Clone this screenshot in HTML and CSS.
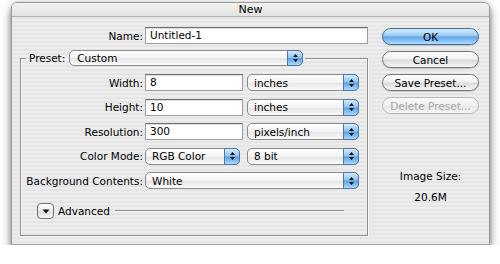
FILE: index.html
```html
<!DOCTYPE html>
<html lang="en">
<head>
    <meta charset="UTF-8">
    <title>New</title>
    <link rel="stylesheet" href="styles.css">
</head>
<body>
<div class="dialog">
    <div class="titlebar">New</div>
    <div class="dialog-body">
        <!-- Left side: fields -->
        <div class="form-side">
            <div class="field-row">
                <label class="field-label">Name:</label>
                <div class="text-input name-input">Untitled-1</div>
            </div>

            <fieldset class="preset-group">
                <legend class="preset-legend">
                    <span class="legend-label">Preset:</span>
                    <div class="popup preset-popup">
                        <span class="popup-label">Custom</span>
                        <span class="popup-arrows"><svg width="7" height="10" viewBox="0 0 7 10"><path d="M3.5 1 L6 4 H1Z M1 6 H6 L3.5 9Z" fill="#111"/></svg></span>
                    </div>
                </legend>

                <div class="rows">
                    <div class="field-row">
                        <label class="field-label">Width:</label>
                        <div class="text-input size-input">8</div>
                        <div class="popup unit-popup">
                            <span class="popup-label">inches</span>
                            <span class="popup-arrows"><svg width="7" height="10" viewBox="0 0 7 10"><path d="M3.5 1 L6 4 H1Z M1 6 H6 L3.5 9Z" fill="#111"/></svg></span>
                        </div>
                    </div>
                    <div class="field-row">
                        <label class="field-label">Height:</label>
                        <div class="text-input size-input">10</div>
                        <div class="popup unit-popup">
                            <span class="popup-label">inches</span>
                            <span class="popup-arrows"><svg width="7" height="10" viewBox="0 0 7 10"><path d="M3.5 1 L6 4 H1Z M1 6 H6 L3.5 9Z" fill="#111"/></svg></span>
                        </div>
                    </div>
                    <div class="field-row">
                        <label class="field-label">Resolution:</label>
                        <div class="text-input size-input">300</div>
                        <div class="popup unit-popup">
                            <span class="popup-label">pixels/inch</span>
                            <span class="popup-arrows"><svg width="7" height="10" viewBox="0 0 7 10"><path d="M3.5 1 L6 4 H1Z M1 6 H6 L3.5 9Z" fill="#111"/></svg></span>
                        </div>
                    </div>
                    <div class="field-row">
                        <label class="field-label">Color Mode:</label>
                        <div class="popup mode-popup">
                            <span class="popup-label">RGB Color</span>
                            <span class="popup-arrows"><svg width="7" height="10" viewBox="0 0 7 10"><path d="M3.5 1 L6 4 H1Z M1 6 H6 L3.5 9Z" fill="#111"/></svg></span>
                        </div>
                        <div class="popup unit-popup">
                            <span class="popup-label">8 bit</span>
                            <span class="popup-arrows"><svg width="7" height="10" viewBox="0 0 7 10"><path d="M3.5 1 L6 4 H1Z M1 6 H6 L3.5 9Z" fill="#111"/></svg></span>
                        </div>
                    </div>
                    <div class="field-row">
                        <label class="field-label">Background Contents:</label>
                        <div class="popup wide-popup">
                            <span class="popup-label">White</span>
                            <span class="popup-arrows"><svg width="7" height="10" viewBox="0 0 7 10"><path d="M3.5 1 L6 4 H1Z M1 6 H6 L3.5 9Z" fill="#111"/></svg></span>
                        </div>
                    </div>
                </div>

                <div class="advanced-row">
                    <span class="disclosure"><svg width="8" height="5" viewBox="0 0 8 5"><path d="M0.5 0.5 H7.5 L4 4.5Z" fill="#111"/></svg></span>
                    <span class="advanced-label">Advanced</span>
                    <span class="advanced-line"></span>
                </div>
            </fieldset>
        </div>

        <!-- Right side: buttons -->
        <div class="button-side">
            <button class="aqua-btn btn-default">OK</button>
            <button class="aqua-btn">Cancel</button>
            <button class="aqua-btn">Save Preset...</button>
            <button class="aqua-btn btn-disabled">Delete Preset...</button>
            <div class="size-title">Image Size:</div>
            <div class="size-value">20.6M</div>
        </div>
    </div>
</div>
</body>
</html>
```

FILE: styles.css
```css
body {
    margin: 0;
    background: #ffffff;
    font-family: "DejaVu Sans", sans-serif;
    font-size: 10.5px;
    color: #000;
}
.dialog {
    box-sizing: border-box;
    width: 479px;
    height: 243px;
    margin: 2px 0 0 11px;
    border: 1px solid #9a9a9a;
    border-radius: 6px 6px 0 0;
    background: repeating-linear-gradient(to bottom, #ededed 0, #ededed 2px, #e5e5e5 2px, #e5e5e5 4px);
    box-shadow: 0 6px 10px rgba(0, 0, 0, 0.5), 0 0 4px rgba(0, 0, 0, 0.2);
    overflow: hidden;
}
.titlebar {
    height: 13px;
    border-bottom: 1px solid #b4b4b4;
    background: linear-gradient(#f2f2f2, #e2e2e2);
    text-align: center;
    font-size: 11px;
    line-height: 14px;
}
.dialog-body {
    display: flex;
    gap: 14px;
    padding: 10px 10px 0 8px;
}
.form-side {
    width: 348px;
}
.field-row {
    display: flex;
    align-items: center;
    height: 17px;
}
.field-label {
    width: 123px;
    text-align: right;
    margin-right: 2px;
    white-space: nowrap;
}
.text-input {
    box-sizing: border-box;
    height: 17px;
    background: #fff;
    border: 1px solid #9c9c9c;
    border-top-color: #6e6e6e;
    box-shadow: inset 0 1px 1px rgba(0, 0, 0, 0.15);
    padding: 0 4px;
    line-height: 15px;
}
.name-input {
    flex: 1;
}
.size-input {
    width: 98px;
    margin-right: 4px;
}
.preset-group {
    margin: 6px 0 0 0;
    padding: 8px 8px 16px 0;
    border: 1px solid #8e8e8e;
    box-shadow: 1px 1px 0 #f8f8f8, inset 1px 1px 0 #f8f8f8;
}
.preset-legend {
    display: flex;
    align-items: center;
    margin-left: 5px;
    padding: 0 2px 0 3px;
    height: 16px;
}
.legend-label {
    margin-right: 4px;
}
.rows {
    display: flex;
    flex-direction: column;
    gap: 7.5px;
}
.rows .field-label {
    width: 122px;
}
.popup {
    box-sizing: border-box;
    display: flex;
    align-items: center;
    height: 17px;
    border: 1px solid #8a8a8a;
    border-radius: 5px;
    background: linear-gradient(#ffffff, #f3f3f3 50%, #e4e4e4 52%, #fbfbfb);
    padding-left: 6px;
}
.popup-label {
    flex: 1;
    white-space: nowrap;
}
.popup-arrows {
    box-sizing: border-box;
    display: flex;
    align-items: center;
    justify-content: center;
    width: 16px;
    align-self: stretch;
    margin: -1px -1px -1px 0;
    border: 1px solid #4f76a6;
    border-radius: 0 5px 5px 0;
    background: linear-gradient(#d6ebfc, #8ec3f1 48%, #5b9fe4 52%, #a7dafd);
}
.preset-popup {
    width: 234px;
    height: 16px;
    padding-left: 7px;
}
.unit-popup {
    width: 112px;
}
.mode-popup {
    width: 95px;
    margin-right: 7px;
}
.wide-popup {
    width: 214px;
}
.advanced-row {
    display: flex;
    align-items: center;
    margin-top: 14px;
    padding-left: 16px;
    height: 16px;
}
.disclosure {
    box-sizing: border-box;
    display: flex;
    align-items: center;
    justify-content: center;
    width: 17px;
    height: 16px;
    border: 1px solid #6f6f6f;
    border-radius: 4px;
    background: linear-gradient(#ffffff, #eeeeee 50%, #dddddd 52%, #f6f6f6);
}
.advanced-label {
    margin-left: 4px;
}
.advanced-line {
    flex: 1;
    height: 0;
    margin: 0 15px 0 5px;
    border-top: 1px solid #8e8e8e;
    border-bottom: 1px solid #f8f8f8;
}
.button-side {
    width: 97px;
    display: flex;
    flex-direction: column;
    gap: 6px;
    padding-top: 1px;
}
.aqua-btn {
    box-sizing: border-box;
    height: 17px;
    padding: 0;
    font-family: inherit;
    font-size: 10.5px;
    color: #000;
    border: 1px solid #777;
    border-radius: 9px;
    background: linear-gradient(#fdfdfd, #f1f1f1 48%, #dadada 52%, #f7f7f7);
    box-shadow: 0 1px 1px rgba(0, 0, 0, 0.15);
}
.btn-default {
    border-color: #41699b;
    background: linear-gradient(#d8ecfc, #93c7f2 48%, #5ea2e6 52%, #addefe);
}
.btn-disabled {
    color: #a6a6a6;
    border-color: #b8b8b8;
    background: linear-gradient(#fafafa, #efefef 50%, #e6e6e6 52%, #f4f4f4);
    box-shadow: none;
}
.size-title {
    margin-top: 50px;
    text-align: center;
    line-height: 13px;
}
.size-value {
    margin-top: 1px;
    text-align: center;
    line-height: 13px;
}
.button-side .size-value {
    margin-top: 2px;
}
```
